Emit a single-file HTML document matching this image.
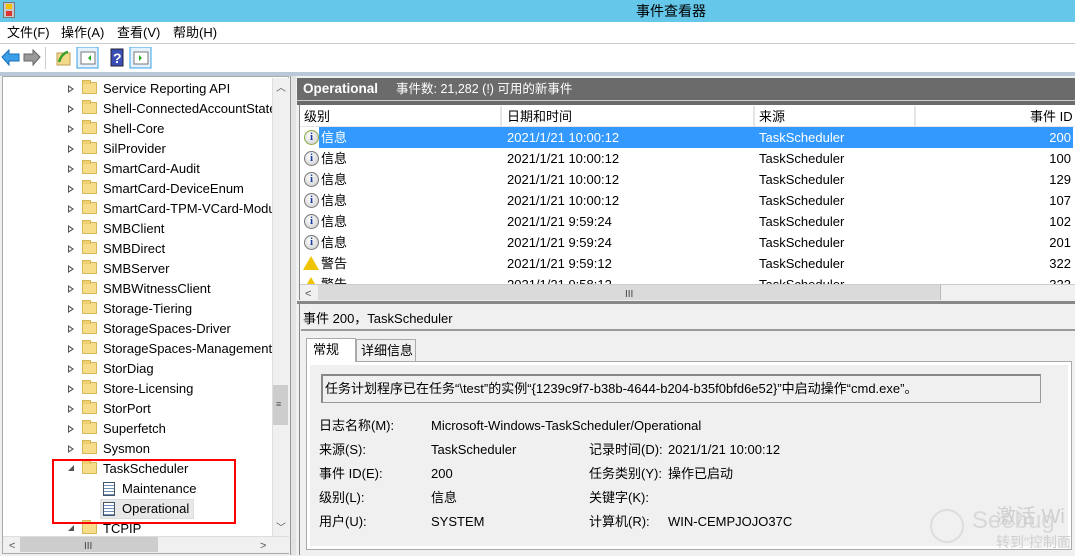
<!DOCTYPE html>
<html><head><meta charset="utf-8">
<style>
*{margin:0;padding:0;box-sizing:border-box}
body{width:1075px;height:555px;overflow:hidden;background:#f0f0f0;font-family:"Liberation Sans","Noto Sans CJK SC",sans-serif;font-size:13px;line-height:18px;color:#000;position:relative}
.a{position:absolute;white-space:nowrap}
.tree div.r{position:absolute;left:0;height:20px;line-height:20px}
.tri{position:absolute;left:68px;top:6px;width:0;height:0;border-left:6px solid #555;border-top:4px solid transparent;border-bottom:4px solid transparent}
.tri:after{content:"";position:absolute;left:-5px;top:-2px;border-left:3px solid #fff;border-top:2px solid transparent;border-bottom:2px solid transparent}
.fold{position:absolute;left:82px;top:3px;width:15px;height:12px;background:#f7dc8a;border:1px solid #d6b85a}
.fold:before{content:"";position:absolute;left:-1px;top:-3px;width:7px;height:3px;background:#f0cf70;border:1px solid #d6b85a;border-bottom:none}
.lbl{position:absolute;left:103px}
.row{position:absolute;left:300px;width:773px;height:21px;line-height:21px}
.row span{position:absolute}
.info{position:absolute;left:4px;top:3px;width:15px;height:15px;border-radius:50%;background:radial-gradient(circle at 40% 35%,#fff,#c8c8c8);border:1px solid #777;color:#1a3c9c;font:bold 11px "Liberation Serif",serif;text-align:center;line-height:13px}
.warn{position:absolute;left:3px;top:3px;width:0;height:0;border-left:8px solid transparent;border-right:8px solid transparent;border-bottom:14px solid #f0c400}
.f{position:absolute;white-space:nowrap;line-height:18px;height:18px}
</style></head><body>
<div class="a" style="left:0;top:0;width:1075px;height:22px;background:#65c7e9"></div>
<div class="a" style="left:3px;top:2px;width:12px;height:16px;background:#c9c9c9;border:1px solid #777"></div>
<div class="a" style="left:6px;top:4px;width:6px;height:5px;background:#f2c200"></div>
<div class="a" style="left:6px;top:11px;width:6px;height:5px;background:#d33"></div>
<div class="a" style="left:636px;top:1px;font-size:14px;line-height:20px">事件查看器</div>
<div class="a" style="left:0;top:22px;width:1075px;height:22px;background:#fff;border-bottom:1px solid #ccc"></div>
<div class="a" style="left:7px;top:24px;line-height:18px">文件(F)</div>
<div class="a" style="left:61px;top:24px;line-height:18px">操作(A)</div>
<div class="a" style="left:117px;top:24px;line-height:18px">查看(V)</div>
<div class="a" style="left:173px;top:24px;line-height:18px">帮助(H)</div>
<div class="a" style="left:0;top:44px;width:1075px;height:28px;background:#fff"></div>
<svg class="a" style="left:0;top:47px" width="160" height="22">
<path d="M2 10 L9 3 L9 7 L19 7 L19 14 L9 14 L9 18 Z" fill="#3a9ee8" stroke="#1c6fb8"/>
<path d="M40 10 L33 3 L33 7 L24 7 L24 14 L33 14 L33 18 Z" fill="#9a9a9a" stroke="#666"/>
<line x1="45.5" y1="0" x2="45.5" y2="22" stroke="#ccc"/>
<rect x="57" y="6" width="13" height="12" fill="#f3d98a" stroke="#c2a055"/>
<path d="M59 15 Q62 6 68 5" stroke="#3aa22c" stroke-width="2.5" fill="none"/>
<rect x="77" y="0" width="21" height="21" fill="#e6f2fb" stroke="#35a0e8"/>
<rect x="81" y="5" width="14" height="12" fill="#fff" stroke="#777"/>
<path d="M88 11 L91 8 L91 14Z" fill="#2a2"/>
<rect x="111" y="2" width="12" height="17" fill="#3a4fb5" stroke="#223"/>
<text x="113" y="16" fill="#fff" font-size="14" font-weight="bold" font-family="Liberation Sans">?</text>
<rect x="130" y="0" width="21" height="21" fill="#e6f2fb" stroke="#35a0e8"/>
<rect x="134" y="5" width="14" height="12" fill="#fff" stroke="#777"/>
<path d="M139 8 L142 11 L139 14Z" fill="#2a2"/>
</svg>
<div class="a" style="left:0;top:72px;width:1075px;height:4px;background:#b9c9da"></div>
<div class="a tree" style="left:2px;top:76px;width:287px;height:478px;background:#fff;border:1px solid #aaa;overflow:hidden"></div>
<div class="a tree" style="left:0;top:79px;width:272px;height:457px;overflow:hidden">
<div class="r" style="top:0"><i class="tri"></i><i class="fold"></i><span class="lbl">Service Reporting API</span></div>
<div class="r" style="top:20px"><i class="tri"></i><i class="fold"></i><span class="lbl">Shell-ConnectedAccountState</span></div>
<div class="r" style="top:40px"><i class="tri"></i><i class="fold"></i><span class="lbl">Shell-Core</span></div>
<div class="r" style="top:60px"><i class="tri"></i><i class="fold"></i><span class="lbl">SilProvider</span></div>
<div class="r" style="top:80px"><i class="tri"></i><i class="fold"></i><span class="lbl">SmartCard-Audit</span></div>
<div class="r" style="top:100px"><i class="tri"></i><i class="fold"></i><span class="lbl">SmartCard-DeviceEnum</span></div>
<div class="r" style="top:120px"><i class="tri"></i><i class="fold"></i><span class="lbl">SmartCard-TPM-VCard-Module</span></div>
<div class="r" style="top:140px"><i class="tri"></i><i class="fold"></i><span class="lbl">SMBClient</span></div>
<div class="r" style="top:160px"><i class="tri"></i><i class="fold"></i><span class="lbl">SMBDirect</span></div>
<div class="r" style="top:180px"><i class="tri"></i><i class="fold"></i><span class="lbl">SMBServer</span></div>
<div class="r" style="top:200px"><i class="tri"></i><i class="fold"></i><span class="lbl">SMBWitnessClient</span></div>
<div class="r" style="top:220px"><i class="tri"></i><i class="fold"></i><span class="lbl">Storage-Tiering</span></div>
<div class="r" style="top:240px"><i class="tri"></i><i class="fold"></i><span class="lbl">StorageSpaces-Driver</span></div>
<div class="r" style="top:260px"><i class="tri"></i><i class="fold"></i><span class="lbl">StorageSpaces-ManagementAgent</span></div>
<div class="r" style="top:280px"><i class="tri"></i><i class="fold"></i><span class="lbl">StorDiag</span></div>
<div class="r" style="top:300px"><i class="tri"></i><i class="fold"></i><span class="lbl">Store-Licensing</span></div>
<div class="r" style="top:320px"><i class="tri"></i><i class="fold"></i><span class="lbl">StorPort</span></div>
<div class="r" style="top:340px"><i class="tri"></i><i class="fold"></i><span class="lbl">Superfetch</span></div>
<div class="r" style="top:360px"><i class="tri"></i><i class="fold"></i><span class="lbl">Sysmon</span></div>
<div class="r" style="top:380px"><span class="a" style="left:68px;top:6px;border-right:6px solid #555;border-top:6px solid transparent"></span><i class="fold"></i><span class="lbl">TaskScheduler</span></div>
<div class="r" style="top:400px"><span class="a" style="left:103px;top:3px;width:12px;height:14px;background:repeating-linear-gradient(#fff 0 2px,#6f8fb8 2px 3px);border:1px solid #456"></span><span class="a" style="left:122px">Maintenance</span></div>
<div class="r" style="top:420px"><span class="a" style="left:100px;top:0;width:94px;height:20px;background:#e8e8e8;border:1px solid #ddd"></span><span class="a" style="left:103px;top:3px;width:12px;height:14px;background:repeating-linear-gradient(#fff 0 2px,#6f8fb8 2px 3px);border:1px solid #456"></span><span class="a" style="left:122px">Operational</span></div>
<div class="r" style="top:440px"><span class="a" style="left:68px;top:6px;border-right:6px solid #555;border-top:6px solid transparent"></span><i class="fold"></i><span class="lbl">TCPIP</span></div>
</div>
<div class="a" style="left:52px;top:459px;width:184px;height:65px;border:2px solid #f00"></div>
<div class="a" style="left:272px;top:78px;width:17px;height:458px;background:#f0f0f0;border-left:1px solid #ddd"></div>
<div class="a" style="left:273px;top:385px;width:15px;height:40px;background:#cdcdcd"></div>
<div class="a" style="left:276px;top:400px;font-size:9px;line-height:9px;color:#555">≡</div>
<div class="a" style="left:276px;top:80px;font-size:10px;color:#555">︿</div>
<div class="a" style="left:276px;top:520px;font-size:10px;color:#555">﹀</div>
<div class="a" style="left:3px;top:536px;width:286px;height:17px;background:#f0f0f0;border-top:1px solid #ddd"></div>
<div class="a" style="left:20px;top:537px;width:138px;height:15px;background:#cdcdcd"></div>
<div class="a" style="left:9px;top:537px;font-size:11px;color:#555">&lt;</div>
<div class="a" style="left:260px;top:537px;font-size:11px;color:#555">&gt;</div>
<div class="a" style="left:84px;top:538px;font-size:10px;color:#444">III</div>
<div class="a" style="left:290px;top:76px;width:6px;height:479px;background:#e3e3e3;border-left:1px solid #999"></div>
<div class="a" style="left:297px;top:78px;width:778px;height:22px;background:#6b6b6b"></div>
<div class="a" style="left:303px;top:80px;line-height:18px;color:#fff;font-weight:bold;font-size:13.5px">Operational</div>
<div class="a" style="left:396px;top:80px;line-height:18px;color:#fff;font-size:12.5px">事件数: 21,282 (!) 可用的新事件</div>
<div class="a" style="left:297px;top:100px;width:778px;height:5px;background:#6b6b6b;border-top:1px solid #ccc"></div>
<div class="a" style="left:299px;top:105px;width:776px;height:195px;background:#fff;border-left:1px solid #888"></div>
<div class="a" style="left:300px;top:106px;width:775px;height:21px;background:#fff;border-bottom:1px solid #e5e5e5"></div>
<div class="a" style="left:500px;top:106px;width:2px;height:21px;background:#e5e5e5"></div>
<div class="a" style="left:753px;top:106px;width:2px;height:21px;background:#e5e5e5"></div>
<div class="a" style="left:914px;top:106px;width:2px;height:21px;background:#e5e5e5"></div>
<div class="a" style="left:304px;top:108px;line-height:18px">级别</div>
<div class="a" style="left:507px;top:108px;line-height:18px">日期和时间</div>
<div class="a" style="left:759px;top:108px;line-height:18px">来源</div>
<div class="a" style="left:1030px;top:108px;line-height:18px">事件 ID</div>
<div style="position:absolute;left:0;top:0;width:1075px;height:285px;overflow:hidden">
<div class="row" style="top:127px;color:#fff"><span style="left:19px;width:754px;height:21px;background:#3399ff"></span><i class="info" style="border-color:#8a4">i</i><span style="left:21px">信息</span><span style="left:207px">2021/1/21 10:00:12</span><span style="left:459px">TaskScheduler</span><span style="right:2px">200</span></div>
<div class="row" style="top:148px"><i class="info">i</i><span style="left:21px">信息</span><span style="left:207px">2021/1/21 10:00:12</span><span style="left:459px">TaskScheduler</span><span style="right:2px">100</span></div>
<div class="row" style="top:169px"><i class="info">i</i><span style="left:21px">信息</span><span style="left:207px">2021/1/21 10:00:12</span><span style="left:459px">TaskScheduler</span><span style="right:2px">129</span></div>
<div class="row" style="top:190px"><i class="info">i</i><span style="left:21px">信息</span><span style="left:207px">2021/1/21 10:00:12</span><span style="left:459px">TaskScheduler</span><span style="right:2px">107</span></div>
<div class="row" style="top:211px"><i class="info">i</i><span style="left:21px">信息</span><span style="left:207px">2021/1/21 9:59:24</span><span style="left:459px">TaskScheduler</span><span style="right:2px">102</span></div>
<div class="row" style="top:232px"><i class="info">i</i><span style="left:21px">信息</span><span style="left:207px">2021/1/21 9:59:24</span><span style="left:459px">TaskScheduler</span><span style="right:2px">201</span></div>
<div class="row" style="top:253px"><i class="warn"></i><span style="left:21px">警告</span><span style="left:207px">2021/1/21 9:59:12</span><span style="left:459px">TaskScheduler</span><span style="right:2px">322</span></div>
<div class="row" style="top:274px"><i class="warn"></i><span style="left:21px">警告</span><span style="left:207px">2021/1/21 9:58:12</span><span style="left:459px">TaskScheduler</span><span style="right:2px">322</span></div>
</div>
<div class="a" style="left:300px;top:284px;width:775px;height:17px;background:#f0f0f0;border-top:1px solid #ccc"></div>
<div class="a" style="left:318px;top:285px;width:623px;height:15px;background:#dadada;border-right:1px solid #bbb"></div>
<div class="a" style="left:305px;top:285px;font-size:11px;color:#555">&lt;</div>
<div class="a" style="left:625px;top:286px;font-size:10px;color:#444">III</div>
<div class="a" style="left:297px;top:301px;width:778px;height:3px;background:#888"></div>
<div class="a" style="left:299px;top:304px;width:776px;height:251px;background:#f0f0f0;border-left:1px solid #888"></div>
<div class="a" style="left:303px;top:310px;line-height:18px">事件 200，TaskScheduler</div>
<div class="a" style="left:301px;top:329px;width:774px;height:2px;background:#999"></div>
<div class="a" style="left:306px;top:338px;width:50px;height:24px;background:#fff;border:1px solid #aaa;border-bottom:none;z-index:2"></div>
<div class="a" style="left:313px;top:341px;line-height:18px;z-index:3">常规</div>
<div class="a" style="left:356px;top:339px;width:60px;height:22px;background:#f0f0f0;border:1px solid #aaa;border-bottom:none"></div>
<div class="a" style="left:361px;top:342px;line-height:18px">详细信息</div>
<div class="a" style="left:306px;top:361px;width:766px;height:189px;border:1px solid #aaa;background:#fff"></div>
<div class="a" style="left:310px;top:365px;width:758px;height:181px;background:#f0f0f0"></div>
<div class="a" style="left:321px;top:374px;width:720px;height:29px;border:1px solid #999;border-top:2px solid #888;border-left:2px solid #888;background:#f0f0f0"></div>
<div class="a" style="left:325px;top:380px;line-height:18px">任务计划程序已在任务“\test”的实例“{1239c9f7-b38b-4644-b204-b35f0bfd6e52}”中启动操作“cmd.exe”。</div>
<div class="f" style="left:319px;top:417px">日志名称(M):</div>
<div class="f" style="left:431px;top:417px">Microsoft-Windows-TaskScheduler/Operational</div>
<div class="f" style="left:319px;top:441px">来源(S):</div>
<div class="f" style="left:431px;top:441px">TaskScheduler</div>
<div class="f" style="left:589px;top:441px">记录时间(D):</div>
<div class="f" style="left:668px;top:441px">2021/1/21 10:00:12</div>
<div class="f" style="left:319px;top:465px">事件 ID(E):</div>
<div class="f" style="left:431px;top:465px">200</div>
<div class="f" style="left:589px;top:465px">任务类别(Y):</div>
<div class="f" style="left:668px;top:465px">操作已启动</div>
<div class="f" style="left:319px;top:489px">级别(L):</div>
<div class="f" style="left:431px;top:489px">信息</div>
<div class="f" style="left:589px;top:489px">关键字(K):</div>
<div class="f" style="left:319px;top:513px">用户(U):</div>
<div class="f" style="left:431px;top:513px">SYSTEM</div>
<div class="f" style="left:589px;top:513px">计算机(R):</div>
<div class="f" style="left:668px;top:513px">WIN-CEMPJOJO37C</div>
<div class="a" style="left:930px;top:509px;width:34px;height:34px;border:2px solid #ddd;border-radius:50%"></div>
<div class="a" style="left:972px;top:506px;font-size:24px;line-height:30px;color:#d8d8d8">Seebug</div>
<div class="a" style="left:996px;top:505px;font-size:20px;line-height:24px;color:#cfcfcf">激活 Wi</div>
<div class="a" style="left:996px;top:533px;font-size:14px;color:#cfcfcf">转到"控制面</div>
</body></html>
